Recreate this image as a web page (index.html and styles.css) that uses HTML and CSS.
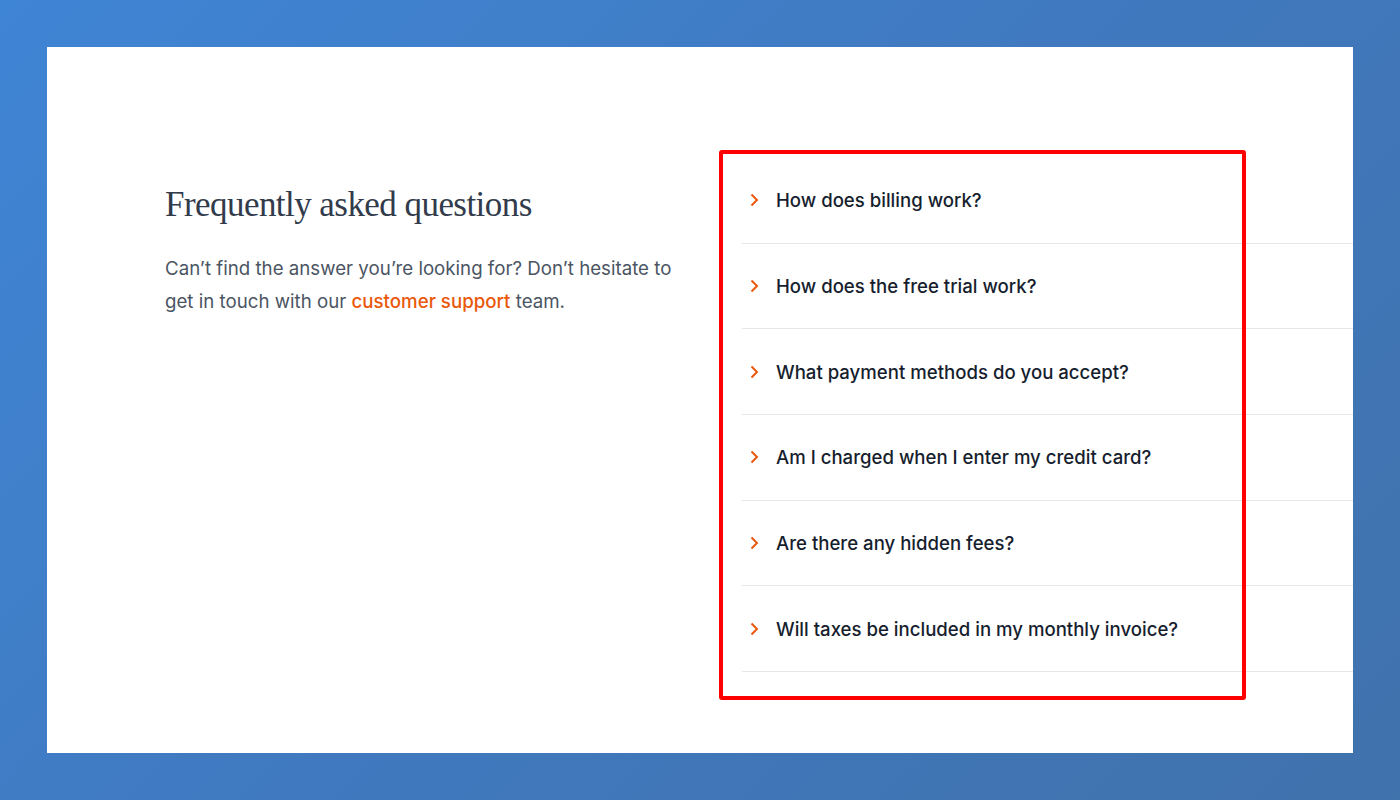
FILE: index.html
```html
<!DOCTYPE html>
<html lang="en">
<head>
    <meta charset="UTF-8">
    <meta name="viewport" content="width=device-width, initial-scale=1.0">
    <title>FAQ</title>
    <link rel="stylesheet" href="styles.css">
</head>
<body>
    <div class="panel">
        <div class="faq">
            <div class="intro">
                <h2 class="title">Frequently asked questions</h2>
                <p class="lead">Can’t find the answer you’re looking for? Don’t hesitate to get in touch with our <a href="#">customer support</a> team.</p>
            </div>
            <ul class="questions">
                <li class="question"><svg class="chev" viewBox="0 0 10 14"><path d="M1.5 1.5l5.5 5.5-5.5 5.5"/></svg>How does billing work?</li>
                <li class="question"><svg class="chev" viewBox="0 0 10 14"><path d="M1.5 1.5l5.5 5.5-5.5 5.5"/></svg>How does the free trial work?</li>
                <li class="question"><svg class="chev" viewBox="0 0 10 14"><path d="M1.5 1.5l5.5 5.5-5.5 5.5"/></svg>What payment methods do you accept?</li>
                <li class="question"><svg class="chev" viewBox="0 0 10 14"><path d="M1.5 1.5l5.5 5.5-5.5 5.5"/></svg>Am I charged when I enter my credit card?</li>
                <li class="question"><svg class="chev" viewBox="0 0 10 14"><path d="M1.5 1.5l5.5 5.5-5.5 5.5"/></svg>Are there any hidden fees?</li>
                <li class="question"><svg class="chev" viewBox="0 0 10 14"><path d="M1.5 1.5l5.5 5.5-5.5 5.5"/></svg>Will taxes be included in my monthly invoice?</li>
            </ul>
        </div>
        <div class="highlight"></div>
    </div>
</body>
</html>
```

FILE: styles.css
```css
/* Základ */
* {
    margin: 0;
    padding: 0;
    box-sizing: border-box;
}
body {
    font-family: Inter, "Liberation Sans", sans-serif;
    background: linear-gradient(135deg, #3f85d5 0%, #4079bf 50%, #4072ac 100%);
    height: 100vh;
    padding: 47px;
}
.panel {
    position: relative;
    background-color: #fff;
    height: 706px;
    overflow: hidden;
    padding: 111px 0 0 118px;
}
.faq {
    display: grid;
    grid-template-columns: 577px 700px;
}
.intro {
    padding-top: 27px;
}
.title {
    font-family: "Liberation Serif", "Times New Roman", serif;
    font-weight: 400;
    font-size: 35px;
    line-height: 40px;
    letter-spacing: -0.55px;
    color: #323b4b;
}
.lead {
    max-width: 520px;
    margin-top: 27px;
    font-size: 18.7px;
    line-height: 33px;
    color: #4b5563;
}
.lead a {
    color: #ea580c;
    font-weight: 500;
    text-decoration: none;
}
.questions {
    list-style: none;
}
.question {
    display: flex;
    align-items: center;
    padding: 28.35px 0 28.35px 8px;
    border-bottom: 1px solid #e5e7eb;
    font-size: 18.6px;
    line-height: 28px;
    font-weight: 500;
    color: #161e2e;
}
.chev {
    width: 10px;
    height: 14px;
    margin-right: 16px;
    fill: none;
    stroke: #ea580c;
    stroke-width: 2;
}
/* anotace */
.highlight {
    position: absolute;
    left: 672px;
    top: 103px;
    width: 527px;
    height: 550px;
    border: 4px solid #ff0000;
    border-radius: 3px;
}
```
